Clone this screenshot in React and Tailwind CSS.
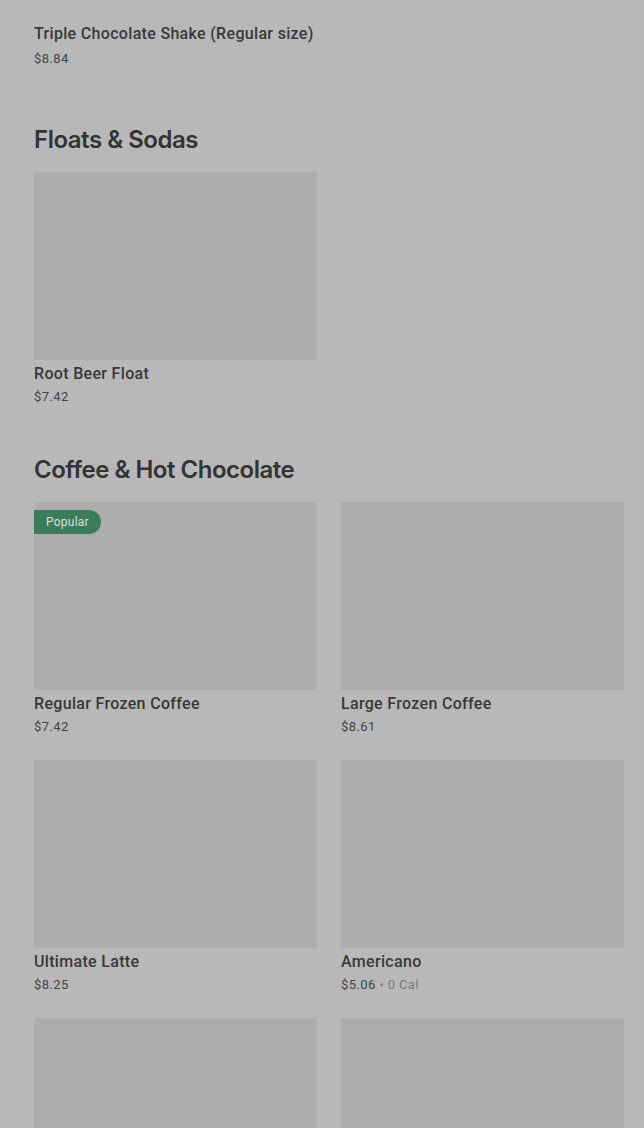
import React from "react";

const sections = [
  {
    title: "Floats & Sodas",
    items: [{ name: "Root Beer Float", price: "$7.42" }],
  },
  {
    title: "Coffee & Hot Chocolate",
    items: [
      { name: "Regular Frozen Coffee", price: "$7.42", popular: true },
      { name: "Large Frozen Coffee", price: "$8.61" },
      { name: "Ultimate Latte", price: "$8.25" },
      { name: "Americano", price: "$5.06", cal: "0 Cal" },
      { name: "", price: "" },
      { name: "", price: "" },
    ],
  },
];

const ItemCard = ({ item }) => (
  <div className="flex flex-col">
    <div className="relative h-[188px] bg-[#adadad]">
      {item.popular && (
        <span className="absolute left-0 top-[8px] flex h-[24px] items-center rounded-r-full bg-[#3b7c5c] pl-[12px] pr-[12px] text-[12px] tracking-[0.02em] text-[#d3e2da]">
          Popular
        </span>
      )}
    </div>
    {item.name && (
      <>
        <div className="mt-[4px] text-[16px] leading-[20px] font-medium tracking-[0.02em] text-[#383838]">
          {item.name}
        </div>
        <div className="mt-[4px] text-[13px] leading-[18px] tracking-[0.03em] text-[#444444]">
          {item.price}
          {item.cal && (
            <span className="text-[#7a7a7a]">
              {" "}
              • {item.cal}
            </span>
          )}
        </div>
      </>
    )}
  </div>
);

export default function App() {
  return (
    <div
      className="min-h-[1128px] overflow-hidden bg-[#b8b8b8] pl-[34px] pr-[20px] pt-[24px]"
      style={{ fontFamily: "Roboto, 'Liberation Sans', sans-serif" }}
    >
      <div className="text-[16px] leading-[20px] font-medium tracking-[0.02em] text-[#383838]">
        Triple Chocolate Shake (Regular size)
      </div>
      <div className="mt-[6px] text-[13px] leading-[18px] tracking-[0.03em] text-[#444444]">$8.84</div>

      {sections.map((s, idx) => (
        <section key={s.title} className={idx === 0 ? "mt-[56px]" : "mt-[48px]"}>
          <h2 className="font-['Inter',sans-serif] text-[24px] leading-[32px] font-semibold tracking-[-0.02em] text-[#333333]">
            {s.title}
          </h2>
          <div className="mt-[16px] grid grid-cols-2 gap-x-[24px] gap-y-[24px]">
            {s.items.map((it, i) => (
              <ItemCard key={i} item={it} />
            ))}
          </div>
        </section>
      ))}
    </div>
  );
}
